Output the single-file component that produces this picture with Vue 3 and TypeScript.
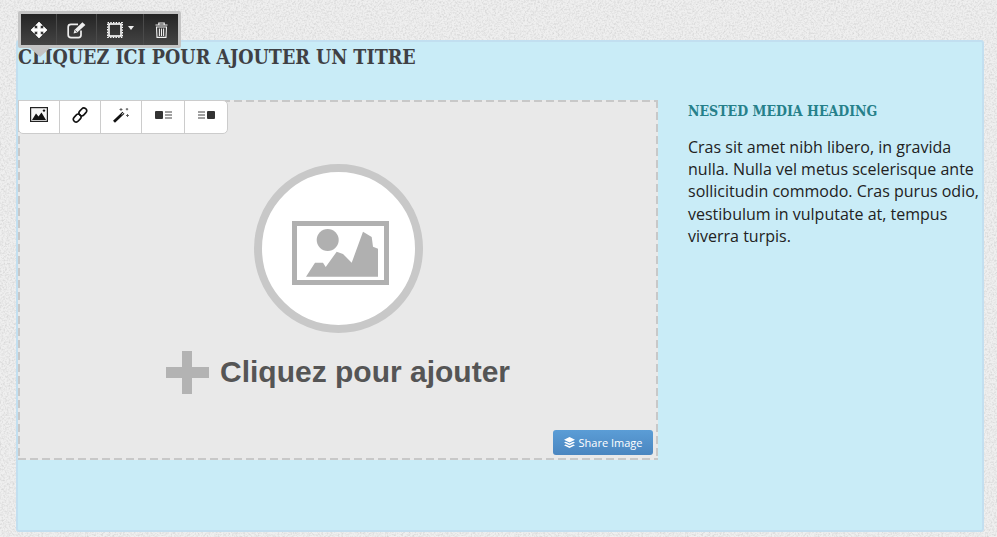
<script setup lang="ts">
const texte = 'Cras sit amet nibh libero, in gravida nulla. Nulla vel metus scelerisque ante sollicitudin commodo. Cras purus odio, vestibulum in vulputate at, tempus viverra turpis.'
</script>

<template>
  <div class="page">
    <!-- barre sombre -->
    <div class="barre-bloc">
      <div class="barre-noire">
        <button class="outil o1">
          <svg width="16" height="16" viewBox="0 0 17 17"><path d="M8.5 0 L12 3.6 H9.9 V7.1 H13.4 V5 L17 8.5 L13.4 12 V9.9 H9.9 V13.4 H12 L8.5 17 L5 13.4 H7.1 V9.9 H3.6 V12 L0 8.5 L3.6 5 V7.1 H7.1 V3.6 H5 Z" fill="#fff" stroke="#fff" stroke-width=".8" stroke-linejoin="round" /></svg>
        </button>
        <button class="outil o2">
          <svg width="19" height="18" viewBox="0 0 19 18"><path d="M14 9.5 V14 Q14 16.6 11.4 16.6 H4 Q1.2 16.6 1.2 14 V6 Q1.2 3.4 4 3.4 H11" fill="none" stroke="#eee" stroke-width="1.7" /><path d="M6.6 12.4 L7.4 9 L15.4 1.2 L18.4 4 L10.2 11.6 Z" fill="#eee" /><path d="M8.2 9.4 L10 11" stroke="#333" stroke-width=".7" /></svg>
        </button>
        <button class="outil o3">
          <svg width="16" height="16" viewBox="0 0 16 16"><rect x="2" y="2" width="12" height="12" fill="none" stroke="#fff" stroke-width="1.6" /><rect x=".6" y=".6" width="14.8" height="14.8" fill="none" stroke="#fff" stroke-width="1.2" stroke-dasharray="1.4 1.3" /></svg>
          <span class="caret"></span>
        </button>
        <button class="outil o4">
          <svg width="13" height="16" viewBox="0 0 13 16"><path d="M.5 3 H12.5 M3.8 3 V1 H9.2 V3" fill="none" stroke="#f0f0f0" stroke-width="1.2" /><path d="M1.5 5 H11.5 L11 15.4 H2 Z M4.4 6.5 V14 M6.5 6.5 V14 M8.6 6.5 V14" fill="none" stroke="#f0f0f0" stroke-width="1.1" /></svg>
        </button>
      </div>
      <span class="fleche"></span>
    </div>

    <section class="panneau">
      <h1 class="titre">CLIQUEZ ICI POUR AJOUTER UN TITRE</h1>

      <div class="media">
        <div class="zone-image">
          <!-- barre blanche -->
          <div class="barre-blanche">
            <button class="b-outil l1">
              <svg width="18" height="15" viewBox="0 0 18 15"><rect x=".6" y=".6" width="16.8" height="13.8" fill="#f4f4f4" stroke="#222" stroke-width="1.2" /><path d="M2 13 L6 6.5 L8.5 9.5 L11.5 5.5 L16 13 Z" fill="#111" /><circle cx="14" cy="3.6" r="1.2" fill="#111" /></svg>
            </button>
            <button class="b-outil l2">
              <svg width="18" height="18" viewBox="0 0 18 18"><g fill="none" stroke="#111" stroke-width="1.6"><rect x="9" y="1.6" width="5.6" height="8.6" rx="2.8" transform="rotate(42 11.8 5.9)" /><rect x="3.4" y="7.8" width="5.6" height="8.6" rx="2.8" transform="rotate(42 6.2 12.1)" /></g></svg>
            </button>
            <button class="b-outil l3">
              <svg width="17" height="16" viewBox="0 0 17 16"><path d="M1 14.8 L10.5 5.8" stroke="#111" stroke-width="2.8" /><path d="M8.6 7.6 L10.8 5.5" stroke="#fff" stroke-width="1" /><path d="M8 1 V4 M6.5 2.5 H9.5 M14 1 V3.4 M12.8 2.2 H15.2 M14.5 7 V10 M13 8.5 H16" stroke="#555" stroke-width=".9" /></svg>
            </button>
            <button class="b-outil l4">
              <svg width="17" height="8" viewBox="0 0 17 8"><rect width="8" height="8" rx="1" fill="#333" /><path d="M10 1 H17 M10 4 H17 M10 7 H17" stroke="#444" /></svg>
            </button>
            <button class="b-outil l5">
              <svg width="17" height="8" viewBox="0 0 17 8"><path d="M0 1 H7 M0 4 H7 M0 7 H7" stroke="#444" /><rect x="9" width="8" height="8" rx="1" fill="#333" /></svg>
            </button>
          </div>

          <div class="rond">
            <svg class="image-vide" width="97" height="64" viewBox="0 0 97 64">
              <rect x="2.5" y="2.5" width="92" height="59" fill="none" stroke="#b0b0b0" stroke-width="5" />
              <circle cx="35.7" cy="19" r="11" fill="#b0b0b0" />
              <path d="M14 55.7 L23 41.7 H31 L33.7 46 L44.7 30.7 L51 33 L59.7 41.7 L71 10.7 L79.7 16 L81 25.7 L86 27.7 V55.7 Z" fill="#b0b0b0" />
            </svg>
          </div>

          <div class="ajouter">
            <span class="plus"></span>
            <span class="ajouter-texte">Cliquez pour ajouter</span>
          </div>

          <button class="partager">
            <svg width="11" height="11" viewBox="0 0 11 11"><path d="M5.5 0 L11 2.8 L5.5 5.6 L0 2.8 Z M1.8 4.7 L5.5 6.6 L9.2 4.7 L11 5.6 L5.5 8.3 L0 5.6 Z M1.8 7.4 L5.5 9.2 L9.2 7.4 L11 8.2 L5.5 11 L0 8.2 Z" fill="#fff" /></svg>
            Share Image
          </button>
        </div>

        <div class="colonne">
          <h4 class="sous-titre">NESTED MEDIA HEADING</h4>
          <p class="texte">{{ texte }}</p>
        </div>
      </div>
    </section>
  </div>
</template>

<style>
html, body {
  margin: 0;
  height: 100%;
  overflow: hidden;
}
body {
  background-color: #efefef;
  background-image: url("data:image/svg+xml,%3Csvg xmlns='http://www.w3.org/2000/svg' width='300' height='300'%3E%3Cfilter id='n'%3E%3CfeTurbulence type='fractalNoise' baseFrequency='.55' numOctaves='3' stitchTiles='stitch'/%3E%3CfeColorMatrix values='0 0 0 0 .6 0 0 0 0 .6 0 0 0 0 .6 1.4 0 0 0 -.55'/%3E%3C/filter%3E%3Crect width='300' height='300' filter='url(%23n)'/%3E%3C/svg%3E");
}
</style>

<style scoped>
.page {
  position: relative;
  width: 997px;
  height: 537px;
  padding: 40px 13px 5px 16px;
  box-sizing: border-box;
}

button {
  border: none;
  background: none;
  padding: 0;
  margin: 0;
  display: flex;
  align-items: center;
  justify-content: center;
}

.barre-bloc {
  position: absolute;
  left: 18px;
  top: 11px;
  z-index: 3;
}

.barre-noire {
  display: flex;
  height: 31px;
  border: 3px solid #c4c4c4;
  border-radius: 2px;
  background: linear-gradient(#242424, #444);
}

.outil {
  height: 31px;
  border-right: 1px solid #4a4a4a;
}

.o1 { width: 36px; }
.o2 { width: 40px; }
.o3 { width: 47px; gap: 5px; }
.o4 { width: 34px; border-right: none; }

.caret {
  width: 0;
  height: 0;
  border-left: 3.5px solid transparent;
  border-right: 3.5px solid transparent;
  border-top: 4px solid #eee;
  margin-bottom: 3px;
}

.fleche {
  position: absolute;
  left: 11px;
  top: 36px;
  width: 0;
  height: 0;
  border-left: 11px solid transparent;
  border-right: 11px solid transparent;
  border-top: 10px solid #c4c4c4;
}

.panneau {
  height: 100%;
  box-sizing: border-box;
  background: #c9ecf7;
  border: 2px solid #c2dff0;
  border-radius: 3px;
}

.titre {
  margin: 2px 0 0;
  height: 56px;
  font-family: "DejaVu Serif", serif;
  font-stretch: condensed;
  font-size: 19.5px;
  line-height: 28px;
  font-weight: 700;
  white-space: nowrap;
  color: #3f4044;
}

.media {
  display: flex;
  align-items: flex-start;
  gap: 30px;
}

.zone-image {
  position: relative;
  width: 640px;
  height: 360px;
  box-sizing: border-box;
  padding-top: 64px;
  background-color: #e9e9e9;
  background-image:
    repeating-linear-gradient(90deg, #c8c8c8 0 8px, transparent 8px 12px),
    repeating-linear-gradient(90deg, #c8c8c8 0 8px, transparent 8px 12px),
    repeating-linear-gradient(#c8c8c8 0 8px, transparent 8px 12px),
    repeating-linear-gradient(#c8c8c8 0 8px, transparent 8px 12px);
  background-size: 100% 2px, 100% 2px, 2px 100%, 2px 100%;
  background-position: 0 0, 0 100%, 0 0, 100% 0;
  background-repeat: no-repeat;
  display: flex;
  flex-direction: column;
  align-items: center;
}

.barre-blanche {
  position: absolute;
  left: 0;
  top: 0;
  display: flex;
  height: 32px;
  border: 1px solid #ccc;
  border-radius: 0 5px 5px 5px;
  background: #fff;
}

.b-outil {
  height: 32px;
  border-right: 1px solid #ccc;
  padding-bottom: 5px;
  box-sizing: border-box;
}

.l1 { width: 41px; }
.l2 { width: 41px; }
.l3 { width: 41px; }
.l4 { width: 43px; }
.l5 { width: 42px; border-right: none; }

.rond {
  width: 153px;
  height: 153px;
  border: 8px solid #c8c8c8;
  border-radius: 50%;
  background: #fff;
  display: flex;
  align-items: center;
  justify-content: center;
  margin-left: 1px;
}

.image-vide {
  margin: 8px 0 0 4px;
}

.ajouter {
  display: flex;
  align-items: center;
  gap: 11px;
  margin-top: 16px;
}

.plus {
  display: block;
  width: 43px;
  height: 43px;
  margin-top: 2px;
  background:
    linear-gradient(#b3b3b3, #b3b3b3) center / 100% 11px no-repeat,
    linear-gradient(#b3b3b3, #b3b3b3) center / 10px 100% no-repeat;
}

.ajouter-texte {
  font-family: "Liberation Sans", Arial, sans-serif;
  font-size: 30px;
  font-weight: 700;
  color: #555;
}

.partager {
  position: absolute;
  right: 5px;
  bottom: 5px;
  width: 100px;
  height: 25px;
  gap: 4px;
  border-radius: 3px;
  background: linear-gradient(#5b9dd6, #4a86c0);
  color: #fff;
  font-family: "Open Sans", sans-serif;
  font-size: 11px;
  font-weight: 500;
}

.colonne {
  flex: 1;
  min-width: 0;
}

.sous-titre {
  margin: 2px 0 0;
  font-family: "DejaVu Serif", serif;
  font-stretch: condensed;
  font-size: 14px;
  line-height: 18px;
  font-weight: 700;
  white-space: nowrap;
  color: #26808a;
}

.texte {
  margin: 15.5px 0 0;
  font-family: "Open Sans", sans-serif;
  font-size: 16px;
  line-height: 22.4px;
  color: #222;
}
</style>
